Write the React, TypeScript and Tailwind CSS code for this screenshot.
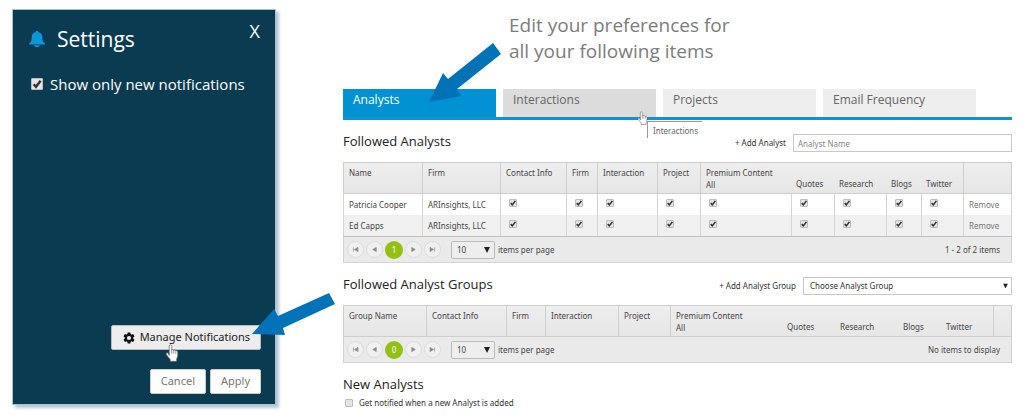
import React, { useState } from 'react';
import clsx from 'clsx';

const TABS = ['Analysts', 'Interactions', 'Projects', 'Email Frequency'];

const ANALYST_COLUMNS = [
  { label: 'Name', width: 79 },
  { label: 'Firm', width: 78 },
  { label: 'Contact Info', width: 66 },
  { label: 'Firm', width: 31 },
  { label: 'Interaction', width: 60 },
  { label: 'Project', width: 43 },
  { label: 'All', width: 91, group: 'Premium Content' },
  { label: 'Quotes', width: 43, sub: true },
  { label: 'Research', width: 52, sub: true },
  { label: 'Blogs', width: 35, sub: true },
  { label: 'Twitter', width: 42, sub: true },
  { label: '', width: 49 },
];

const GROUP_COLUMNS = [
  { label: 'Group Name', width: 83 },
  { label: 'Contact Info', width: 80 },
  { label: 'Firm', width: 39 },
  { label: 'Interaction', width: 73 },
  { label: 'Project', width: 52 },
  { label: 'All', width: 112, group: 'Premium Content' },
  { label: 'Quotes', width: 53, sub: true },
  { label: 'Research', width: 63, sub: true },
  { label: 'Blogs', width: 43, sub: true },
  { label: 'Twitter', width: 52, sub: true },
  { label: '', width: 19 },
];

const ANALYSTS = [
  { name: 'Patricia Cooper', firm: 'ARInsights, LLC' },
  { name: 'Ed Capps', firm: 'ARInsights, LLC' },
];

type Column = { label: string; width: number; group?: string; sub?: boolean };

type CheckboxProps = {
  id?: string;
  label?: string;
  defaultChecked?: boolean;
  large?: boolean;
};

const Checkbox = ({ id, label, defaultChecked, large }: CheckboxProps) => (
  <span className={clsx('inline-grid shrink-0', large ? 'size-3' : 'size-2')}>
    <input
      id={id}
      type="checkbox"
      aria-label={label}
      defaultChecked={defaultChecked}
      className="peer col-start-1 row-start-1 size-full appearance-none rounded-[1px] border border-[#bcbcbc] bg-[#e4e4e4]"
    />
    <svg
      viewBox="0 0 12 12"
      className="pointer-events-none invisible col-start-1 row-start-1 size-full peer-checked:visible"
    >
      <path d="M2.6 6.2 5 8.8 9.6 2.8" fill="none" stroke="#333" strokeWidth="2.4" />
    </svg>
  </span>
);

const HandCursor = ({ className }: { className: string }) => (
  <svg viewBox="0 0 20 26" className={clsx('pointer-events-none absolute', className)}>
    <path
      d="M6 16.5V3.2C6 .6 9.6.6 9.6 3.2V9c.4-1.6 3-1.4 3 .4.5-1.4 2.9-1.1 2.9.8.7-1.1 2.8-.7 2.8 1.2v5.2c0 2-1.6 3.8-1.6 5.6V25H7.4v-2.6L2 15.6c-1.4-2 .8-3.8 2.4-2.2Z"
      fill="#fff"
      stroke="#666"
      strokeWidth="1"
      strokeLinejoin="round"
    />
    <path d="M9.6 9v5M12.6 9.5V14M15.5 10.5V14" stroke="#666" strokeWidth="1" />
  </svg>
);

const Arrow = ({ points, className, viewBox }: { points: string; className: string; viewBox: string }) => (
  <svg viewBox={viewBox} className={clsx('pointer-events-none absolute', className)}>
    <polygon points={points} fill="#0072b8" />
  </svg>
);

const Bell = () => (
  <svg viewBox="0 0 16 18" className="h-[18px] w-4 shrink-0" fill="#0a96d8">
    <path d="M6.700 2C6.700.3 9.300.3 9.300 2c2.700.6 4 2.600 4 5.200 0 3 .4 4.600 2.600 6.100V14.500H.1v-1.200c2.200-1.500 2.600-3.100 2.600-6.100C2.700 4.600 4 2.600 6.700 2Z" />
    <path d="M5 15.200h6c-.4 1.300-1.400 2-3 2s-2.600-.7-3-2Z" />
  </svg>
);

const Gear = () => (
  <svg viewBox="0 0 24 24" className="size-[14px] shrink-0" fill="#111">
    <path d="M19.140 12.940c.04-.3.06-.61.06-.94s-.02-.64-.07-.94l2.030-1.580a.49.49 0 0 0 .12-.61l-1.920-3.320a.49.49 0 0 0-.59-.22l-2.390.96a7 7 0 0 0-1.620-.94l-.36-2.540A.48.48 0 0 0 13.920 2.400h-3.840a.48.48 0 0 0-.47.41l-.36 2.540c-.59.240-1.130.570-1.620.94l-2.390-.96a.48.48 0 0 0-.59.220L2.740 8.870a.48.48 0 0 0 .12.610l2.030 1.580c-.05.300-.09.630-.09.940s.020.640.070.940l-2.030 1.580a.49.49 0 0 0-.12.610l1.920 3.320c.12.220.370.290.590.220l2.390-.96c.5.380 1.030.700 1.620.940l.36 2.540c.05.240.240.410.480.410h3.840c.24 0 .44-.17.470-.41l.36-2.540a7 7 0 0 0 1.620-.94l2.390.96c.22.080.470 0 .590-.22l1.920-3.320a.48.48 0 0 0-.12-.61ZM12 15.600a3.600 3.600 0 1 1 0-7.200 3.600 3.600 0 0 1 0 7.200Z" />
  </svg>
);

const PAGER_ICONS = {
  'First page': 'M2 2v6M8.500 2 3.500 5l5 3Z',
  'Previous page': 'M7.500 2 2.500 5l5 3Z',
  'Next page': 'M2.500 2l5 3-5 3Z',
  'Last page': 'M1.500 2l5 3-5 3ZM8 2v6',
};

const PagerButton = ({ label }: { label: keyof typeof PAGER_ICONS }) => (
  <button
    type="button"
    aria-label={label}
    className="flex size-[17px] items-center justify-center rounded-full border border-[#dcdbdc] bg-[#f1f0f1]"
  >
    <svg viewBox="0 0 10 10" className="size-[7px]" fill="#8a8a8a" stroke="#8a8a8a">
      <path d={PAGER_ICONS[label]} />
    </svg>
  </button>
);

const Caret = ({ small }: { small?: boolean }) => (
  <svg
    viewBox="0 0 6 6"
    className={clsx('pointer-events-none absolute top-1/2 -translate-y-1/2', small ? 'right-1 size-[5px]' : 'right-[5px] size-[6px]')}
  >
    <path d="M0 0h6L3 6Z" fill="#222" />
  </svg>
);

const Pager = ({ page, status }: { page: number; status: string }) => (
  <div className="flex h-[26px] items-center border border-t-0 border-[#d4d3d4] bg-[#ebeaeb] pr-[11px] pl-[3px] text-[8px] text-[#444]">
    <div className="flex items-center gap-[2px]">
      <PagerButton label="First page" />
      <PagerButton label="Previous page" />
      <button type="button" className="size-[18px] rounded-full bg-[#93c015] text-white">
        {page}
      </button>
      <PagerButton label="Next page" />
      <PagerButton label="Last page" />
    </div>
    <label className="ml-[10px] flex items-center gap-[3px]">
      <span className="relative">
        <select className="h-[18px] w-11 appearance-none rounded-[2px] border border-[#bbb] bg-[#efeeef] pl-[5px]">
          <option>10</option>
          <option>20</option>
        </select>
        <Caret />
      </span>
      items per page
    </label>
    <span className="ml-auto">{status}</span>
  </div>
);

const GridHead = ({ columns }: { columns: Column[] }) => (
  <>
    <colgroup>
      {columns.map((col, i) => (
        <col key={i} style={{ width: `${(col.width / 669) * 100}%` }} />
      ))}
    </colgroup>
    <thead>
      <tr className="h-8 bg-linear-to-b from-[#efeeef] to-[#e7e6e7]">
        {columns.map((col, i) => (
          <th
            key={i}
            className={clsx(
              'border-y border-[#cfcecf] px-[5px] font-normal whitespace-nowrap',
              col.sub ? 'pb-[3px] align-bottom' : 'pt-1 align-top',
              !col.sub && 'border-l',
              i === columns.length - 1 && 'border-r',
            )}
          >
            {col.group && <span className="block">{col.group}</span>}
            {col.label}
          </th>
        ))}
      </tr>
    </thead>
  </>
);

const Panel = () => (
  <aside className="relative mt-[9px] mb-[15px] flex w-[264px] shrink-0 flex-col border border-[#a9c0cd] bg-[#0a3b50] pr-[14px] pb-[10px] pl-4 text-white shadow-[3px_3px_3px_#b5c6d2]">
    <header className="flex items-start pt-[15px]">
      <h1 className="flex items-center gap-3 text-[21px] leading-7">
        <Bell />
        Settings
      </h1>
      <button type="button" aria-label="Close" className="-mt-1 mr-px ml-auto text-[18px] leading-5">
        X
      </button>
    </header>
    <label htmlFor="only-new" className="mt-[21px] flex items-center gap-[7px] pl-[2px] text-[15px] leading-5">
      <Checkbox id="only-new" defaultChecked large />
      Show only new notifications
    </label>
    <div className="mt-auto flex justify-end font-['Noto_Sans',sans-serif]">
      <button
        type="button"
        className="flex h-[25px] items-center gap-1 rounded-[2px] border border-[#bbb] bg-[#ededed] px-[10px] text-[11px] whitespace-nowrap text-[#222]"
      >
        <Gear />
        Manage Notifications
      </button>
    </div>
    <div className="mt-[19px] flex justify-end gap-1 font-['Noto_Sans',sans-serif] text-[11px] text-[#777]">
      <button type="button" className="h-[25px] rounded-[2px] border border-[#ccc] bg-white px-[10px]">
        Cancel
      </button>
      <button type="button" className="h-[25px] rounded-[2px] border border-[#ccc] bg-white px-[10px]">
        Apply
      </button>
    </div>
    <HandCursor className="right-[96px] bottom-[42px] h-[18px] w-[14px]" />
    <Arrow
      viewBox="252 293 83 43"
      className="bottom-[68px] left-[239px] h-[43px] w-[83px]"
      points="252,334 274,309 278,316 329,293 335,304 283,328 285,335"
    />
  </aside>
);

const App = () => {
  const [active, setActive] = useState('Analysts');

  return (
    <div className="flex min-h-screen bg-white pr-[11px] pl-3 font-['Open_Sans',sans-serif]">
      <Panel />
      <main className="relative ml-[67px] min-w-0 flex-1 text-[#333]">
        <p className="pt-3 pl-[166px] text-[19px] leading-[26px] text-[#7c7c7c]">
          Edit your preferences for
          <br />
          all your following items
        </p>

        <nav className="mt-[25px] flex gap-[7px] border-b-[3px] border-[#1690cc]">
          {TABS.map((tab) => (
            <button
              key={tab}
              type="button"
              onClick={() => setActive(tab)}
              className={clsx(
                'h-7 w-[153px] pb-[6px] pl-[10px] text-left text-[12px] leading-5',
                tab === active && 'bg-[#0092d2] text-white',
                tab !== active && tab === 'Interactions' && 'bg-[#dcdcdc] text-[#666]',
                tab !== active && tab !== 'Interactions' && 'bg-[#eee] text-[#666]',
              )}
            >
              {tab}
            </button>
          ))}
        </nav>

        <div className="font-['Noto_Sans',sans-serif] text-[8px]">
          <section className="mt-[14px]">
            <div className="flex h-[18px] items-center">
              <h2 className="pb-[3px] font-['Open_Sans',sans-serif] text-[13px] text-[#222]">Followed Analysts</h2>
              <label htmlFor="analyst" className="mr-[7px] ml-auto">
                + Add Analyst
              </label>
              <input
                id="analyst"
                placeholder="Analyst Name"
                className="h-[18px] w-[219px] border border-[#c8c8c8] px-1 placeholder:text-[#888]"
              />
            </div>
            <table className="mt-[10px] w-full table-fixed border-separate border-spacing-0 text-left leading-3 text-[#444]">
              <GridHead columns={ANALYST_COLUMNS} />
              <tbody>
                {ANALYSTS.map((analyst) => (
                  <tr key={analyst.name} className="h-[21px] even:bg-[#f0f0f0]">
                    <td className="border-l border-[#d6d5d6] px-[5px] whitespace-nowrap">{analyst.name}</td>
                    <td className="border-l border-[#d6d5d6] px-[5px] whitespace-nowrap">{analyst.firm}</td>
                    {ANALYST_COLUMNS.slice(2, 11).map((col, i) => (
                      <td key={i} className="border-l border-[#d6d5d6] px-2 pb-[2px] leading-[8px]">
                        <Checkbox label={`${analyst.name} ${col.label}`} defaultChecked />
                      </td>
                    ))}
                    <td className="border-x border-[#d6d5d6] px-[5px]">
                      <button type="button" className="text-[#777]">
                        Remove
                      </button>
                    </td>
                  </tr>
                ))}
              </tbody>
            </table>
            <div className="border-t border-[#c0bfc0]">
              <Pager page={1} status="1 - 2 of 2 items" />
            </div>
          </section>

          <section className="mt-[14px]">
            <div className="flex h-[18px] items-center">
              <h2 className="pb-[3px] font-['Open_Sans',sans-serif] text-[13px] text-[#222]">
                Followed Analyst Groups
              </h2>
              <label htmlFor="group" className="mr-[7px] ml-auto">
                + Add Analyst Group
              </label>
              <span className="relative flex">
                <select
                  id="group"
                  className="h-[18px] w-[209px] appearance-none border border-[#c8c8c8] bg-white px-[6px]"
                >
                  <option>Choose Analyst Group</option>
                </select>
                <Caret small />
              </span>
            </div>
            <table className="mt-[10px] w-full table-fixed border-separate border-spacing-0 text-left leading-3 text-[#444]">
              <GridHead columns={GROUP_COLUMNS} />
            </table>
            <Pager page={0} status="No items to display" />
          </section>

          <section className="mt-[11px]">
            <h2 className="font-['Open_Sans',sans-serif] text-[13px] leading-5 text-[#222]">New Analysts</h2>
            <label htmlFor="notify" className="mt-[3px] flex items-center gap-[6px] pl-[2px] leading-3">
              <Checkbox id="notify" />
              Get notified when a new Analyst is added
            </label>
          </section>

          <div
            role="tooltip"
            className="absolute top-[121px] left-[304px] h-[17px] w-[55px] border-t border-l border-[#999] bg-white pl-[5px] leading-[18px] text-[#666]"
          >
            Interactions
          </div>
        </div>
        <HandCursor className="top-[111px] left-[294px] h-[14px] w-[11px]" />
        <Arrow
          viewBox="429 42 73 60"
          className="top-[42px] left-[86px] h-[60px] w-[73px]"
          points="429,102 443,73 448,79 493,43 501,54 457,89 461,96"
        />
      </main>
    </div>
  );
};

export default App;
